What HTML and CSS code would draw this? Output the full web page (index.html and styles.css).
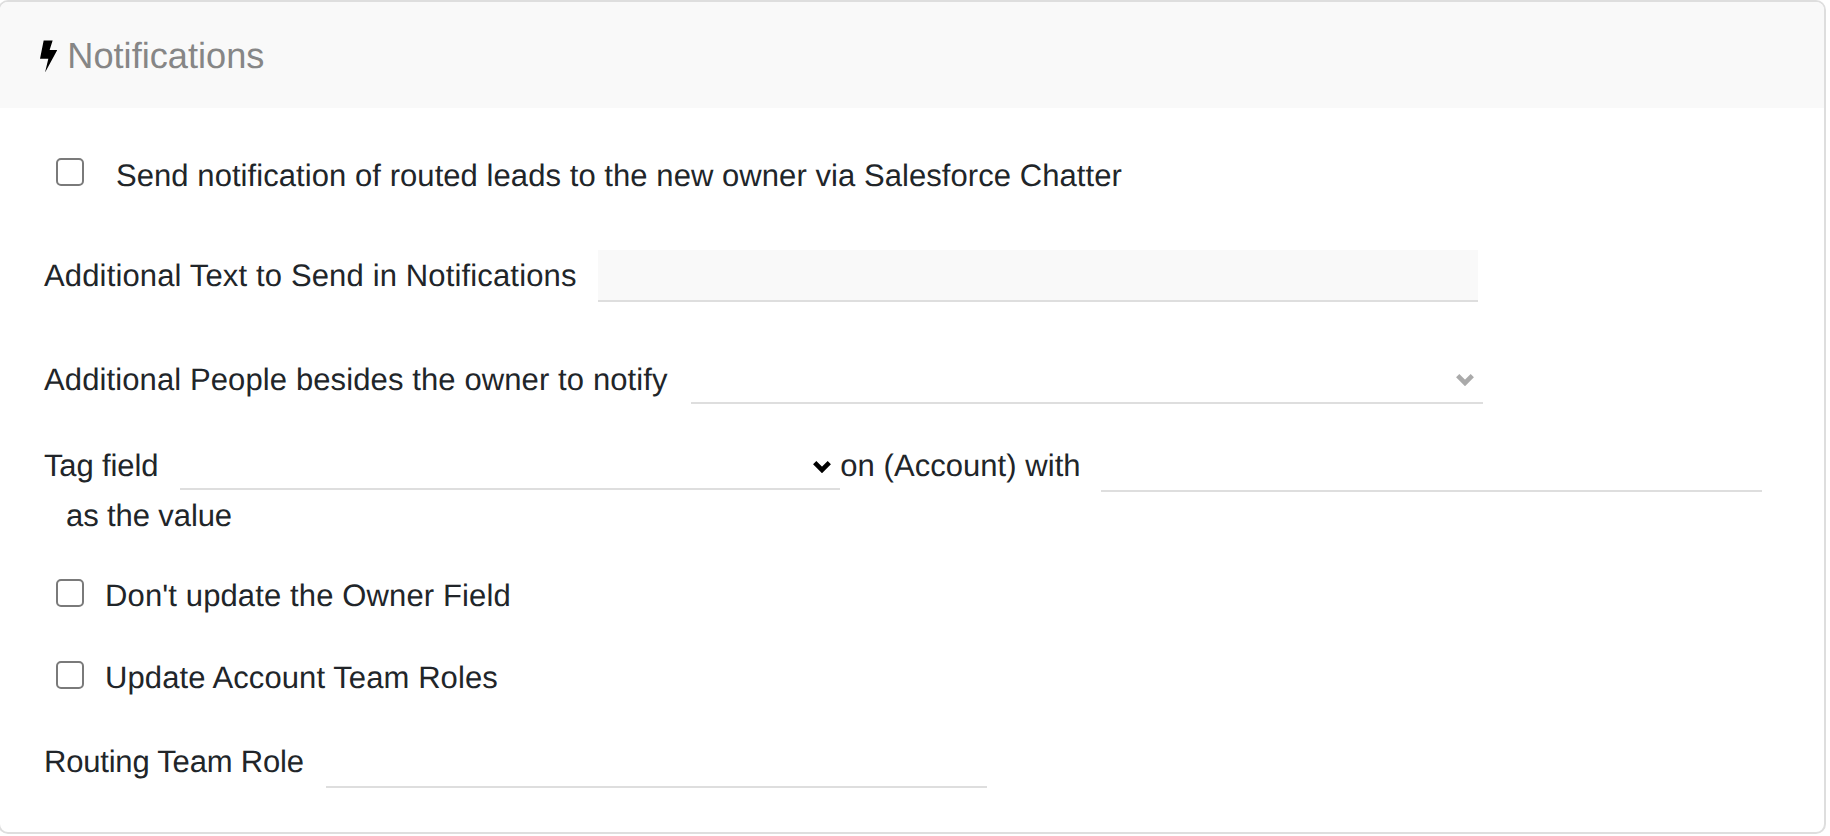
FILE: index.html
```html
<!DOCTYPE html>
<html lang="en">
<head>
<meta charset="utf-8">
<title>Notifications</title>
<link rel="stylesheet" href="styles.css">
</head>
<body>
<section class="card">
  <header class="card-head">
    <svg class="bolt" viewBox="0 0 52 98" aria-hidden="true"><path d="M11 1H38L29 30H52L15 98L25 56H0Z"/></svg>
    <h2 class="card-title">Notifications</h2>
  </header>
  <form class="card-body">
    <div class="row row-check">
      <input class="check" type="checkbox">
      <label class="label label-wide">Send notification of routed leads to the new owner via Salesforce Chatter</label>
    </div>
    <div class="row row-text">
      <label class="label label-text">Additional Text to Send in Notifications</label>
      <input class="field field-filled" type="text">
    </div>
    <div class="row row-people">
      <label class="label label-people">Additional People besides the owner to notify</label>
      <div class="select select-people">
        <svg class="chev chev-muted" viewBox="0 0 18 13" aria-hidden="true"><path d="M1.7 2.7L9 10L16.3 2.7"/></svg>
      </div>
    </div>
    <div class="row row-tag">
      <label class="label label-tag">Tag field</label>
      <div class="select select-tag">
        <svg class="chev" viewBox="0 0 18 13" aria-hidden="true"><path d="M1.7 2.7L9 10L16.3 2.7"/></svg>
      </div>
      <span class="label label-tight">on (Account) with</span>
      <input class="field field-tag" type="text">
      <span class="label label-value">as the value</span>
    </div>
    <div class="row row-check row-owner">
      <input class="check" type="checkbox">
      <label class="label label-owner">Don't update the Owner Field</label>
    </div>
    <div class="row row-check row-team">
      <input class="check" type="checkbox">
      <label class="label label-team">Update Account Team Roles</label>
    </div>
    <div class="row row-role">
      <label class="label label-role">Routing Team Role</label>
      <input class="field field-role" type="text">
    </div>
  </form>
</section>
</body>
</html>
```
FILE: styles.css
```css
* { box-sizing: border-box; }
html, body { margin: 0; padding: 0; background: #fff; }
body {
  font-family: "Liberation Sans", Arial, sans-serif;
  color: #212529;
  overflow: hidden;
  height: 836px;
  text-rendering: geometricPrecision;
}
.card {
  width: 1828px;
  height: 834px;
  margin-left: -2px;
  border: 2px solid #dedede;
  border-radius: 10px;
  background: #fff;
  overflow: hidden;
}
.card-head {
  height: 106px;
  background: #f9f9f9;
  display: flex;
  align-items: center;
  padding-left: 40px;
  gap: 10px;
}
.bolt { width: 17.3px; height: 32.7px; fill: #000; margin-top: 2px; }
.card-title {
  margin: 2px 0 0;
  font-size: 36.2px;
  font-weight: 400;
  color: #868686;
}
.card-body { padding-left: 44px; }
.row { display: flex; }
.label {
  font-size: 31px;
  line-height: 48px;
  white-space: nowrap;
}
.row-check { height: 34px; padding-left: 12px; margin-top: 50px; gap: 21px; }
.row-check .label { line-height: 34px; }
.label-wide { margin: 1px 0 0 11px; letter-spacing: 0.064px; }
.label-text { letter-spacing: 0.146px; }
.label-people { letter-spacing: 0.11px; }
.label-tag { letter-spacing: -0.13px; }
.label-tight { margin-right: 20px; letter-spacing: 0.05px; }
.label-value { margin-left: 22px; letter-spacing: -0.1px; }
.label-owner { letter-spacing: 0.125px; }
.label-team { letter-spacing: 0.09px; }
.label-role { letter-spacing: -0.2px; }
.check {
  appearance: none;
  width: 28px;
  height: 28px;
  margin: 0;
  border: 2px solid #7a7a7a;
  border-radius: 5px;
  background: #fff;
}
.field {
  display: block;
  border: 0;
  border-bottom: 2px solid #dedede;
  background: transparent;
  outline: 0;
  padding: 0;
}
.field-filled { width: 880px; height: 52px; background: #f9f9f9; }
.row-text { margin-top: 58px; align-items: center; gap: 21px; }
.row-people { margin-top: 53px; height: 49px; align-items: center; gap: 23px; }
.select {
  position: relative;
  border-bottom: 2px solid #dedede;
}
.select-people { width: 792px; height: 49px; }
.chev {
  position: absolute;
  width: 18px;
  height: 13px;
  fill: none;
  stroke: #000;
  stroke-width: 4.6;
}
.chev-muted { stroke: #aaa; right: 9px; top: 18px; }
.row-tag { margin-top: 38px; flex-wrap: wrap; align-items: flex-start; }
.select-tag { width: 660px; height: 48px; margin-left: 22px; }
.select-tag .chev { right: 9px; top: 18px; }
.field-tag { width: 661px; height: 50px; }
.row-owner { margin-top: 39px; }
.row-team { margin-top: 48px; }
.row-role { margin-top: 43px; align-items: flex-start; gap: 22px; }
.field-role { width: 661px; height: 50px; }
```
